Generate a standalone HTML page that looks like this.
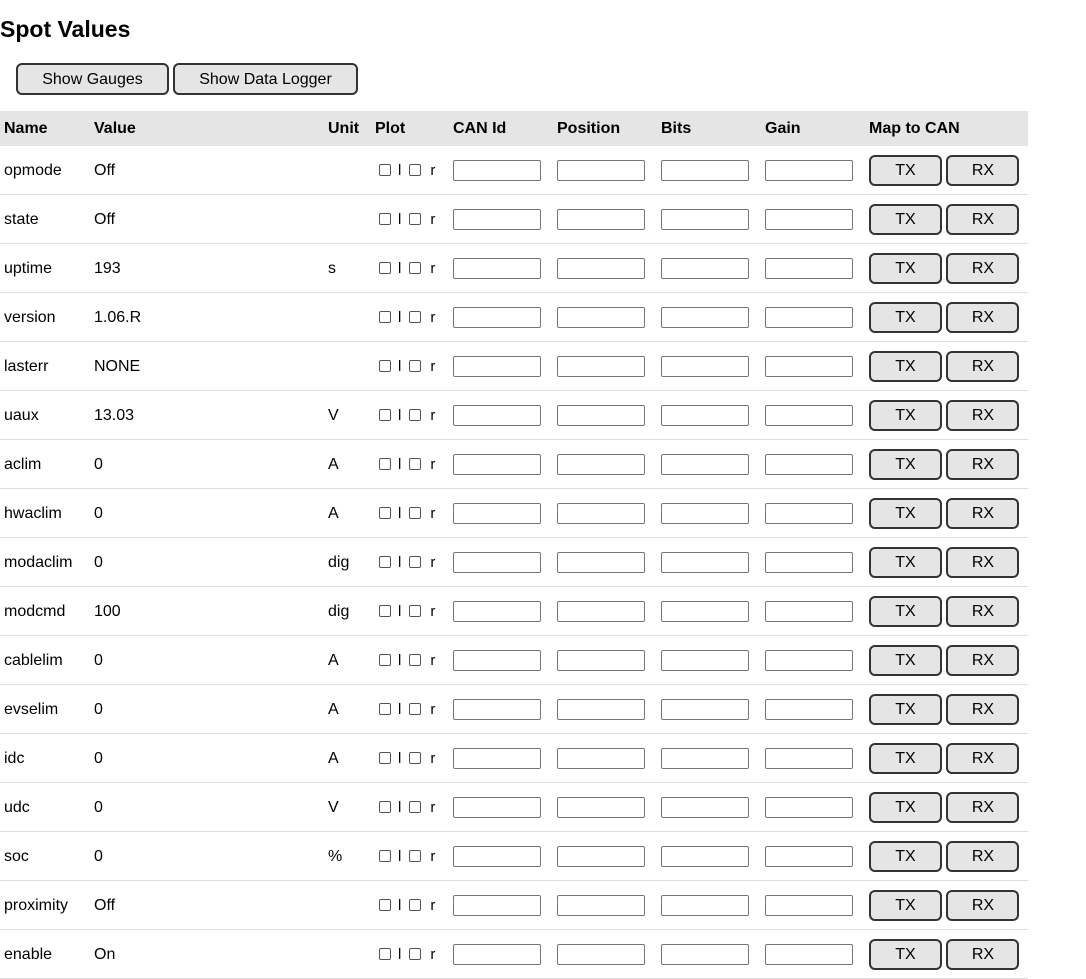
<!DOCTYPE html>
<html><head><meta charset="utf-8"><style>
body{margin:0;background:#fff;font-family:"Liberation Sans",Arial,sans-serif;font-size:16px;color:#000;width:1086px;height:968px;overflow:hidden;position:relative}
h1{position:absolute;left:0;top:16px;margin:0;font-size:23px;font-weight:bold}
.b{position:absolute;top:63px;height:32px;box-sizing:border-box;border:2px solid #333;border-radius:6px;background:#e5e5e5;font-size:16px;text-align:center;line-height:29px}
table{position:absolute;left:0;top:111px;border-collapse:collapse;width:1028px;table-layout:fixed}
th{background:#e5e5e5;height:35px;text-align:left;font-weight:bold;padding:0 0 0 4px;font-size:16px}
td{height:47px;border-bottom:1px solid #ddd;padding:1px 0 0 4px;font-size:16px;white-space:nowrap}
.cb{display:inline-block;width:12px;height:12px;border:1px solid #555;border-radius:2px;vertical-align:-1px;box-sizing:border-box}
.pl{padding-left:8px;font-size:15px}
.pl span.t{display:inline-block;margin:0 8px 0 7px}
.pl span.t.r{margin:0 0 0 9px}
.in{display:inline-block;width:88px;height:21px;border:1px solid #767676;border-radius:2px;box-sizing:border-box;vertical-align:middle}
.bt{display:inline-block;width:73px;height:31px;box-sizing:border-box;border:2px solid #333;border-radius:6px;background:#e5e5e5;text-align:center;line-height:27px;vertical-align:middle}
</style></head><body>
<h1>Spot Values</h1>
<div class="b" style="left:16px;width:153px">Show Gauges</div>
<div class="b" style="left:173px;width:185px">Show Data Logger</div>
<table>
<colgroup><col style="width:90px"><col style="width:234px"><col style="width:47px"><col style="width:78px"><col style="width:104px"><col style="width:104px"><col style="width:104px"><col style="width:104px"><col></colgroup>
<tr><th>Name</th><th>Value</th><th>Unit</th><th>Plot</th><th>CAN Id</th><th>Position</th><th>Bits</th><th>Gain</th><th>Map to CAN</th></tr>
<tr><td>opmode</td><td>Off</td><td></td><td class="pl"><span class="cb"></span><span class="t">l</span><span class="cb"></span><span class="t r">r</span></td><td><span class="in"></span></td><td><span class="in"></span></td><td><span class="in"></span></td><td><span class="in"></span></td><td><span class="bt">TX</span> <span class="bt">RX</span></td></tr>
<tr><td>state</td><td>Off</td><td></td><td class="pl"><span class="cb"></span><span class="t">l</span><span class="cb"></span><span class="t r">r</span></td><td><span class="in"></span></td><td><span class="in"></span></td><td><span class="in"></span></td><td><span class="in"></span></td><td><span class="bt">TX</span> <span class="bt">RX</span></td></tr>
<tr><td>uptime</td><td>193</td><td>s</td><td class="pl"><span class="cb"></span><span class="t">l</span><span class="cb"></span><span class="t r">r</span></td><td><span class="in"></span></td><td><span class="in"></span></td><td><span class="in"></span></td><td><span class="in"></span></td><td><span class="bt">TX</span> <span class="bt">RX</span></td></tr>
<tr><td>version</td><td>1.06.R</td><td></td><td class="pl"><span class="cb"></span><span class="t">l</span><span class="cb"></span><span class="t r">r</span></td><td><span class="in"></span></td><td><span class="in"></span></td><td><span class="in"></span></td><td><span class="in"></span></td><td><span class="bt">TX</span> <span class="bt">RX</span></td></tr>
<tr><td>lasterr</td><td>NONE</td><td></td><td class="pl"><span class="cb"></span><span class="t">l</span><span class="cb"></span><span class="t r">r</span></td><td><span class="in"></span></td><td><span class="in"></span></td><td><span class="in"></span></td><td><span class="in"></span></td><td><span class="bt">TX</span> <span class="bt">RX</span></td></tr>
<tr><td>uaux</td><td>13.03</td><td>V</td><td class="pl"><span class="cb"></span><span class="t">l</span><span class="cb"></span><span class="t r">r</span></td><td><span class="in"></span></td><td><span class="in"></span></td><td><span class="in"></span></td><td><span class="in"></span></td><td><span class="bt">TX</span> <span class="bt">RX</span></td></tr>
<tr><td>aclim</td><td>0</td><td>A</td><td class="pl"><span class="cb"></span><span class="t">l</span><span class="cb"></span><span class="t r">r</span></td><td><span class="in"></span></td><td><span class="in"></span></td><td><span class="in"></span></td><td><span class="in"></span></td><td><span class="bt">TX</span> <span class="bt">RX</span></td></tr>
<tr><td>hwaclim</td><td>0</td><td>A</td><td class="pl"><span class="cb"></span><span class="t">l</span><span class="cb"></span><span class="t r">r</span></td><td><span class="in"></span></td><td><span class="in"></span></td><td><span class="in"></span></td><td><span class="in"></span></td><td><span class="bt">TX</span> <span class="bt">RX</span></td></tr>
<tr><td>modaclim</td><td>0</td><td>dig</td><td class="pl"><span class="cb"></span><span class="t">l</span><span class="cb"></span><span class="t r">r</span></td><td><span class="in"></span></td><td><span class="in"></span></td><td><span class="in"></span></td><td><span class="in"></span></td><td><span class="bt">TX</span> <span class="bt">RX</span></td></tr>
<tr><td>modcmd</td><td>100</td><td>dig</td><td class="pl"><span class="cb"></span><span class="t">l</span><span class="cb"></span><span class="t r">r</span></td><td><span class="in"></span></td><td><span class="in"></span></td><td><span class="in"></span></td><td><span class="in"></span></td><td><span class="bt">TX</span> <span class="bt">RX</span></td></tr>
<tr><td>cablelim</td><td>0</td><td>A</td><td class="pl"><span class="cb"></span><span class="t">l</span><span class="cb"></span><span class="t r">r</span></td><td><span class="in"></span></td><td><span class="in"></span></td><td><span class="in"></span></td><td><span class="in"></span></td><td><span class="bt">TX</span> <span class="bt">RX</span></td></tr>
<tr><td>evselim</td><td>0</td><td>A</td><td class="pl"><span class="cb"></span><span class="t">l</span><span class="cb"></span><span class="t r">r</span></td><td><span class="in"></span></td><td><span class="in"></span></td><td><span class="in"></span></td><td><span class="in"></span></td><td><span class="bt">TX</span> <span class="bt">RX</span></td></tr>
<tr><td>idc</td><td>0</td><td>A</td><td class="pl"><span class="cb"></span><span class="t">l</span><span class="cb"></span><span class="t r">r</span></td><td><span class="in"></span></td><td><span class="in"></span></td><td><span class="in"></span></td><td><span class="in"></span></td><td><span class="bt">TX</span> <span class="bt">RX</span></td></tr>
<tr><td>udc</td><td>0</td><td>V</td><td class="pl"><span class="cb"></span><span class="t">l</span><span class="cb"></span><span class="t r">r</span></td><td><span class="in"></span></td><td><span class="in"></span></td><td><span class="in"></span></td><td><span class="in"></span></td><td><span class="bt">TX</span> <span class="bt">RX</span></td></tr>
<tr><td>soc</td><td>0</td><td>%</td><td class="pl"><span class="cb"></span><span class="t">l</span><span class="cb"></span><span class="t r">r</span></td><td><span class="in"></span></td><td><span class="in"></span></td><td><span class="in"></span></td><td><span class="in"></span></td><td><span class="bt">TX</span> <span class="bt">RX</span></td></tr>
<tr><td>proximity</td><td>Off</td><td></td><td class="pl"><span class="cb"></span><span class="t">l</span><span class="cb"></span><span class="t r">r</span></td><td><span class="in"></span></td><td><span class="in"></span></td><td><span class="in"></span></td><td><span class="in"></span></td><td><span class="bt">TX</span> <span class="bt">RX</span></td></tr>
<tr><td>enable</td><td>On</td><td></td><td class="pl"><span class="cb"></span><span class="t">l</span><span class="cb"></span><span class="t r">r</span></td><td><span class="in"></span></td><td><span class="in"></span></td><td><span class="in"></span></td><td><span class="in"></span></td><td><span class="bt">TX</span> <span class="bt">RX</span></td></tr>
</table>
</body></html>
